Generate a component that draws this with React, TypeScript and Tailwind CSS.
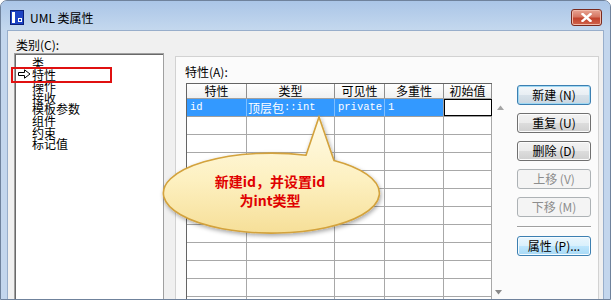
import React from 'react';

const ui = "font-['Noto_Sans_CJK_SC',sans-serif]";
const mono = "font-['Liberation_Mono','Noto_Sans_CJK_SC',monospace]";

const categories = ['类', '特性', '操作', '接收', '模板参数', '组件', '约束', '标记值'];

const headers = ['特性', '类型', '可见性', '多重性', '初始值'];
const colWidths = ['w-[60px]', 'w-[88px]', 'w-[50px]', 'w-[59px]', 'w-[48px]'];

type BtnKind = 'default' | 'normal' | 'disabled' | 'hot';

const btnStyles: Record<BtnKind, string> = {
  default:
    'border-[#3c7fb1] text-black bg-[linear-gradient(#f3f7fa_0%,#e8eef3_50%,#d8e2ea_50%,#cad6e0_100%)] shadow-[inset_0_0_0_1px_#9fd8f3]',
  normal:
    'border-[#707070] text-black bg-[linear-gradient(#f2f2f2_0%,#ebebeb_50%,#dddddd_50%,#cfcfcf_100%)] shadow-[inset_0_0_0_1px_#fcfcfc]',
  disabled: 'border-[#adb2b5] text-[#8d8d8d] bg-[#f4f4f4]',
  hot:
    'border-[#3c7fb1] text-black bg-[linear-gradient(#eaf6fd_0%,#d9f0fc_50%,#bee6fd_50%,#a7d9f5_100%)] shadow-[inset_0_0_0_1px_#f4fbff]',
};

const Btn = ({ label, kind }: { label: string; kind: BtnKind }) => (
  <div
    className={`w-[74px] h-[20px] rounded-[3px] border flex items-center justify-center text-[12px] leading-[12px] ${btnStyles[kind]}`}
  >
    {label}
  </div>
);

const WindowIcon = () => (
  <svg width="14" height="15" viewBox="0 0 14 15">
    <rect x="0.5" y="0.5" width="13" height="14" fill="#1d43c4" stroke="#0a1e78" />
    <rect x="2" y="2" width="3" height="11" fill="#ffffff" />
    <rect x="8" y="8" width="4" height="4" fill="#ffffff" />
    <rect x="9" y="9" width="2" height="2" fill="#1d43c4" />
  </svg>
);

const PointerArrow = () => (
  <svg width="13" height="10" viewBox="0 0 13 10">
    <path d="M0.5 3.5 H6.5 V0.8 L12 5 L6.5 9.2 V6.5 H0.5 Z" fill="#ffffff" stroke="#000000" strokeWidth="1" />
  </svg>
);

export default function App() {
  const emptyRows = Array.from({ length: 11 });

  return (
    <div
      className={`relative w-[611px] h-[300px] overflow-hidden rounded-t-[7px] border border-[#6f829c] bg-[#c3d6ed] ${ui}`}
    >
      {/* title bar */}
      <div className="h-[29px] flex items-start pt-[9px] pl-[9px] pr-[8px] bg-[linear-gradient(#aac5e7,#c4d8ee)]">
        <WindowIcon />
        <span className="ml-[6px] text-[12px] leading-[16px] text-black">UML 类属性</span>
        <div className="ml-auto -mt-[1px] w-[31px] h-[17px] rounded-[3px] border border-[#7a2a1e] bg-[linear-gradient(#e8a493_0%,#d67763_45%,#c2432d_55%,#d0634b_100%)] flex items-center justify-center shadow-[inset_0_0_0_1px_#f0b8a8]">
          <svg width="11" height="9" viewBox="0 0 11 9">
            <path d="M1.5 1 L9.5 8 M9.5 1 L1.5 8" stroke="#ffffff" strokeWidth="2.4" strokeLinecap="square" />
          </svg>
        </div>
      </div>

      {/* client area */}
      <div className="mx-[6px] h-[275px] border border-[#98aecb] bg-[#f0f0f0] flex">
        {/* category list */}
        <div className="w-[167px] shrink-0">
          <div className="pt-[8px] pl-[8px] text-[12px] leading-[12px] text-black">类别(C):</div>
          <div className="mt-[2px] ml-[6px] w-[150px] h-[260px] bg-white border border-[#a0a0a0] shadow-[inset_1px_1px_0_#696969]">
            <div className="pt-[3px] pl-[3px]">
              {categories.map((c, i) => (
                <div key={c} className="flex items-center h-[11.6px] text-[12px] leading-[11.6px] text-black">
                  <div className="w-[14px] flex items-center">{i === 1 && <PointerArrow />}</div>
                  <span className="leading-[11.6px]">{c}</span>
                </div>
              ))}
            </div>
          </div>
        </div>

        {/* property page */}
        <div className="mt-[25px] mr-[4px] flex-1 bg-[#fbfbfb] border border-[#d2d2d2]">
          <div className="pt-[9px] pl-[9px] text-[12px] leading-[12px] text-black">特性(A):</div>
          <div className="mt-[5px] pl-[10px] flex">
            {/* grid */}
            <div className="border-l border-t border-[#646464] bg-white">
              <div className="flex h-[15px] border-b border-[#a0a0a0] bg-[linear-gradient(#ffffff,#f0f0f0)]">
                {headers.map((h, i) => (
                  <div
                    key={h}
                    className={`${colWidths[i]} border-r border-[#8e8e8e] flex items-center justify-center text-[12px] leading-[12px] text-black`}
                  >
                    {h}
                  </div>
                ))}
              </div>
              <div className="flex h-[18px] border-b border-[#a0a0a0]">
                <div className={`${colWidths[0]} bg-[#3399ff] border-r border-[#7fbfff] pl-[3px] flex items-center text-white text-[10.5px] ${mono}`}>
                  id
                </div>
                <div className={`${colWidths[1]} bg-[#3399ff] border-r border-[#7fbfff] pl-[1px] flex items-center text-white text-[12px]`}>
                  <span>顶层包</span>
                  <span className={`text-[10.5px] ${mono}`}>::int</span>
                </div>
                <div className={`${colWidths[2]} bg-[#3399ff] border-r border-[#7fbfff] pl-[3px] flex items-center text-white text-[10.5px] ${mono}`}>
                  private
                </div>
                <div className={`${colWidths[3]} bg-[#3399ff] border-r border-[#a0a0a0] pl-[3px] flex items-center text-white text-[10.5px] ${mono}`}>
                  1
                </div>
                <div className={`${colWidths[4]} bg-white border border-black`} />
              </div>
              {emptyRows.map((_, r) => (
                <div key={r} className="flex h-[18px] border-b border-[#a8a8a8]">
                  {colWidths.map((w, i) => (
                    <div key={i} className={`${w} border-r border-[#a8a8a8]`} />
                  ))}
                </div>
              ))}
            </div>
            {/* scroll arrows */}
            <div className="w-[16px] flex flex-col items-center pt-[22px]">
              <svg width="7" height="5" viewBox="0 0 7 5">
                <path d="M0 5 L3.5 0.5 L7 5 Z" fill="#a5a5a5" />
              </svg>
              <svg className="mt-[180px] -ml-[3px]" width="7" height="5" viewBox="0 0 7 5">
                <path d="M0 0 L3.5 4.5 L7 0 Z" fill="#8a8a8a" />
              </svg>
            </div>

            {/* buttons */}
            <div className="ml-[9px] mt-[2px] flex flex-col gap-[8px]">
              <Btn label="新建 (N)" kind="default" />
              <Btn label="重复 (U)" kind="normal" />
              <Btn label="删除 (D)" kind="normal" />
              <Btn label="上移 (V)" kind="disabled" />
              <Btn label="下移 (M)" kind="disabled" />
              <div className="mt-[1px] h-[2px] border-t border-[#a0a0a0] border-b border-b-white" />
              <Btn label="属性 (P)..." kind="hot" />
            </div>
          </div>
        </div>
      </div>

      {/* annotation: red box around the selected category */}
      <div className="absolute left-[10px] top-[66px] w-[101px] h-[16px] border-2 border-[#e01010]" />

      {/* annotation: callout bubble */}
      <svg className="absolute left-0 top-0 pointer-events-none" width="611" height="300" viewBox="0 0 611 300">
        <defs>
          <linearGradient id="bubbleFill" x1="0" y1="0" x2="0" y2="1">
            <stop offset="0" stopColor="#fffbe8" />
            <stop offset="0.55" stopColor="#fdf0c0" />
            <stop offset="1" stopColor="#f6df98" />
          </linearGradient>
          <filter id="bubbleShadow" x="-20%" y="-30%" width="140%" height="160%">
            <feDropShadow dx="1" dy="2" stdDeviation="2" floodColor="#000000" floodOpacity="0.35" />
          </filter>
        </defs>
        <path
          d="M305 154.2 L318 116 L333 159.5 A108 40 0 1 1 305 154.2 Z"
          fill="url(#bubbleFill)"
          stroke="#d3a23c"
          strokeWidth="1.6"
          filter="url(#bubbleShadow)"
        />
      </svg>
      <div className="absolute left-[162px] top-[171px] w-[214px] text-center text-[14px] leading-[19px] font-bold text-[#e00000]">
        新建id，并设置id
        <br />
        为int类型
      </div>
    </div>
  );
}
